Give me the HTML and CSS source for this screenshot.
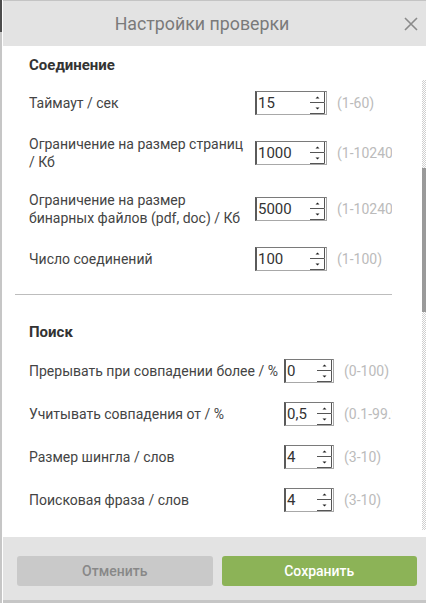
FILE: index.html
```html
<!DOCTYPE html>
<html lang="ru">
<head>
<meta charset="utf-8">
<title>Настройки проверки</title>
<link rel="stylesheet" href="styles.css">
</head>
<body>
<div class="screen">
  <div class="edge"><div class="edge-top"></div></div>
  <div class="dialog">
    <header class="dlg-head">
      <div class="dlg-title">Настройки проверки</div>
      <div class="close">
        <svg width="14" height="14" viewBox="0 0 14 14"><path d="M1 1 L13 13 M13 1 L1 13" stroke="#8a8a8a" stroke-width="1.6" fill="none"/></svg>
      </div>
    </header>
    <div class="dlg-body">
      <div class="content">
        <section class="sec sec-conn">
          <h2 class="sec-title">Соединение</h2>
          <div class="rows">
            <div class="row">
              <span class="label">Таймаут / сек</span>
              <div class="num"><span class="val">15</span><svg class="spin" viewBox="0 0 16 22"><path d="M1 10.5H15.5V0M1 21.5H15.5V11" stroke="#555" stroke-width="1" fill="none"/><path d="M6.5 6.5L8.5 4.5L10.5 6.5Z M6.5 15.5L8.5 17.5L10.5 15.5Z" fill="#222"/></svg></div>
              <span class="range">(1-60)</span>
            </div>
            <div class="row">
              <span class="label">Ограничение на размер страниц / Кб</span>
              <div class="num"><span class="val">1000</span><svg class="spin" viewBox="0 0 16 22"><path d="M1 10.5H15.5V0M1 21.5H15.5V11" stroke="#555" stroke-width="1" fill="none"/><path d="M6.5 6.5L8.5 4.5L10.5 6.5Z M6.5 15.5L8.5 17.5L10.5 15.5Z" fill="#222"/></svg></div>
              <span class="range">(1-10240)</span>
            </div>
            <div class="row">
              <span class="label">Ограничение на размер бинарных файлов (pdf, doc) / Кб</span>
              <div class="num"><span class="val">5000</span><svg class="spin" viewBox="0 0 16 22"><path d="M1 10.5H15.5V0M1 21.5H15.5V11" stroke="#555" stroke-width="1" fill="none"/><path d="M6.5 6.5L8.5 4.5L10.5 6.5Z M6.5 15.5L8.5 17.5L10.5 15.5Z" fill="#222"/></svg></div>
              <span class="range">(1-10240)</span>
            </div>
            <div class="row">
              <span class="label">Число соединений</span>
              <div class="num"><span class="val">100</span><svg class="spin" viewBox="0 0 16 22"><path d="M1 10.5H15.5V0M1 21.5H15.5V11" stroke="#555" stroke-width="1" fill="none"/><path d="M6.5 6.5L8.5 4.5L10.5 6.5Z M6.5 15.5L8.5 17.5L10.5 15.5Z" fill="#222"/></svg></div>
              <span class="range">(1-100)</span>
            </div>
          </div>
        </section>
        <hr class="sep">
        <section class="sec sec-search">
          <h2 class="sec-title">Поиск</h2>
          <div class="rows">
            <div class="row">
              <span class="label">Прерывать при совпадении более / %</span>
              <div class="num"><span class="val">0</span><svg class="spin" viewBox="0 0 16 22"><path d="M1 10.5H15.5V0M1 21.5H15.5V11" stroke="#555" stroke-width="1" fill="none"/><path d="M6.5 6.5L8.5 4.5L10.5 6.5Z M6.5 15.5L8.5 17.5L10.5 15.5Z" fill="#222"/></svg></div>
              <span class="range">(0-100)</span>
            </div>
            <div class="row">
              <span class="label">Учитывать совпадения от / %</span>
              <div class="num"><span class="val">0,5</span><svg class="spin" viewBox="0 0 16 22"><path d="M1 10.5H15.5V0M1 21.5H15.5V11" stroke="#555" stroke-width="1" fill="none"/><path d="M6.5 6.5L8.5 4.5L10.5 6.5Z M6.5 15.5L8.5 17.5L10.5 15.5Z" fill="#222"/></svg></div>
              <span class="range">(0.1-99.9)</span>
            </div>
            <div class="row">
              <span class="label">Размер шингла / слов</span>
              <div class="num"><span class="val">4</span><svg class="spin" viewBox="0 0 16 22"><path d="M1 10.5H15.5V0M1 21.5H15.5V11" stroke="#555" stroke-width="1" fill="none"/><path d="M6.5 6.5L8.5 4.5L10.5 6.5Z M6.5 15.5L8.5 17.5L10.5 15.5Z" fill="#222"/></svg></div>
              <span class="range">(3-10)</span>
            </div>
            <div class="row">
              <span class="label">Поисковая фраза / слов</span>
              <div class="num"><span class="val">4</span><svg class="spin" viewBox="0 0 16 22"><path d="M1 10.5H15.5V0M1 21.5H15.5V11" stroke="#555" stroke-width="1" fill="none"/><path d="M6.5 6.5L8.5 4.5L10.5 6.5Z M6.5 15.5L8.5 17.5L10.5 15.5Z" fill="#222"/></svg></div>
              <span class="range">(3-10)</span>
            </div>
          </div>
        </section>
      </div>
      <div class="scroll"><div class="track"><div class="thumb"></div></div></div>
    </div>
    <footer class="dlg-foot">
      <button class="btn btn-cancel">Отменить</button>
      <button class="btn btn-save">Сохранить</button>
    </footer>
  </div>
</div>
</body>
</html>
```

FILE: styles.css
```css
html, body {
  margin: 0;
  padding: 0;
  background: #fff;
  font-family: Roboto, "Noto Sans", "DejaVu Sans", sans-serif;
}

.screen {
  display: flex;
  width: 430px;
  height: 603px;
  overflow: hidden;
}

.edge {
  width: 2px;
  margin-right: 1px;
  background: #c6c6c6;
  display: flex;
  flex-direction: column;
}

.edge-top {
  height: 32px;
  background: #4d4d4d;
}

.dialog {
  width: 423px;
  height: 603px;
  box-sizing: border-box;
  display: flex;
  flex-direction: column;
  border-top: 1px solid #c4c4c4;
  border-bottom: 3px solid #c6c6c6;
}

.dlg-head {
  height: 45px;
  flex: none;
  display: flex;
  align-items: center;
  background: #e3e3e3;
}

.dlg-title {
  flex: 1;
  text-align: center;
  font-size: 17.8px;
  color: #7a7a7a;
}

.close {
  width: 22px;
  padding-left: 3px;
  display: flex;
  align-items: center;
}

.dlg-body {
  flex: 1;
  display: flex;
  background: #fff;
  overflow: hidden;
}

.content {
  width: 389px;
  flex: none;
  overflow: hidden;
}

.sec {
  padding-left: 26px;
}

.sec-title {
  margin: 9px 0 16px;
  font-size: 15px;
  line-height: 20px;
  font-weight: 700;
  color: #333;
}

.sec-search .sec-title {
  margin: 27px 0 17px;
}

.rows {
  display: flex;
  flex-direction: column;
  gap: 20px;
}

.sec-search .rows {
  gap: 19px;
}

.row {
  display: grid;
  grid-template-columns: 226px 72px auto;
  align-items: center;
}

.sec-search .row {
  grid-template-columns: 255px 50px auto;
}

.label {
  font-size: 14px;
  line-height: 18px;
  color: #444;
  padding-right: 4px;
}

.num {
  height: 24px;
  box-sizing: border-box;
  display: flex;
  align-items: stretch;
  justify-content: space-between;
  border-top: 1px solid #7a7a7a;
  border-left: 2px solid #5a5a5a;
  border-right: 1px solid #a8a8a8;
  border-bottom: 1px solid #a8a8a8;
  background: #fff;
}

.val {
  padding-left: 1px;
  font-size: 15px;
  line-height: 22px;
  color: #333;
}

.spin {
  width: 16px;
  height: 22px;
  margin-right: 1px;
}

.range {
  margin-left: 10px;
  font-size: 14px;
  color: #bbb;
  white-space: nowrap;
}

.sep {
  margin: 23px 0 0 12px;
  height: 1px;
  border: 0;
  background: #bdbdbd;
}

.scroll {
  margin-left: auto;
  width: 4px;
  padding: 34px 0 7px;
  display: flex;
}

.track {
  flex: 1;
  background: repeating-conic-gradient(#cfcfcf 0 25%, #fff 0 50%) 0 0 / 2px 2px;
}

.thumb {
  margin-top: 88px;
  height: 144px;
  background: #9a9a9a;
}

.dlg-foot {
  height: 63px;
  flex: none;
  box-sizing: border-box;
  display: flex;
  gap: 9px;
  padding: 19px 9px 14px 14px;
  background: #e3e3e3;
}

.btn {
  flex: 1;
  height: 30px;
  border: 0;
  border-radius: 3px;
  font-family: Roboto, "Noto Sans", sans-serif;
  font-size: 14px;
  font-weight: 500;
}

.btn-cancel {
  background: #c9c9c9;
  color: #888;
}

.btn-save {
  background: #8cb357;
  color: #fff;
}
```
